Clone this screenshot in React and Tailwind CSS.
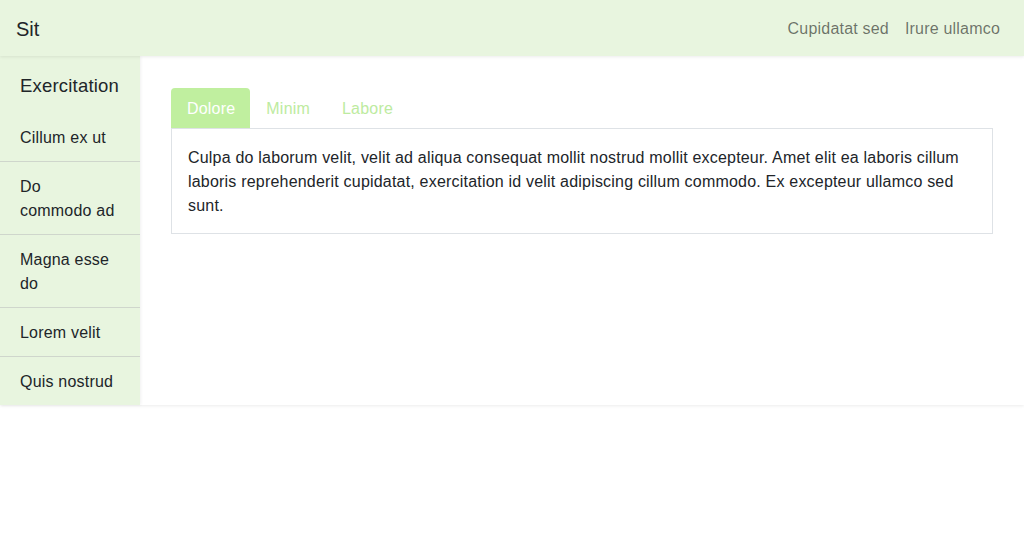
export default function App() {
  const items = ["Cillum ex ut", "Do commodo ad", "Magna esse do", "Lorem velit", "Quis nostrud"];
  return (
    <div className="w-[1024px] min-h-[549px] bg-white text-[#212529] tracking-[0.2px]" style={{ fontFamily: '"Liberation Sans", Arial, sans-serif' }}>
      <header className="relative z-10 flex h-14 items-center justify-between bg-[#e8f5df] pl-4 pr-6 shadow-[0_1px_3px_rgba(0,0,0,0.08)]">
        <span className="pt-px text-[20px] leading-7 tracking-normal">Sit</span>
        <nav className="flex gap-4 pt-px text-[16px] leading-6 text-black/55">
          <span>Cupidatat sed</span>
          <span>Irure ullamco</span>
        </nav>
      </header>
      <div className="flex shadow-[0_1px_3px_rgba(0,0,0,0.08)]">
        <aside className="w-[140px] shrink-0 bg-[#e8f5df] shadow-[1px_0_3px_rgba(0,0,0,0.06)]">
          <div className="pl-5 pr-4 pt-4 pb-[13px] text-[18.5px] leading-7">Exercitation</div>
          <ul className="text-[16px] leading-6">
            {items.map((t, i) => (
              <li key={t} className={`pl-5 pr-6 pt-[13px] pb-[11px] ${i < items.length - 1 ? "border-b border-[#cfd6cc]" : ""}`}>{t}</li>
            ))}
          </ul>
        </aside>
        <main className="flex-1 px-[31px] pt-8">
          <div className="flex text-[16px] leading-6">
            <span className="rounded-t-[4px] bg-[#c0ef9f] pl-4 pr-[15px] pt-[9px] pb-[7px] text-white">Dolore</span>
            <span className="px-4 pt-[9px] pb-[7px] text-[#bdeba0]">Minim</span>
            <span className="px-4 pt-[9px] pb-[7px] text-[#bdeba0]">Labore</span>
          </div>
          <div className="border border-[#dee2e6] px-4 pt-[17px] pb-[15px] text-[16px] leading-6">
            Culpa do laborum velit, velit ad aliqua consequat mollit nostrud mollit excepteur. Amet elit ea laboris cillum laboris reprehenderit cupidatat, exercitation id velit adipiscing cillum commodo. Ex excepteur ullamco sed sunt.
          </div>
        </main>
      </div>
    </div>
  );
}
